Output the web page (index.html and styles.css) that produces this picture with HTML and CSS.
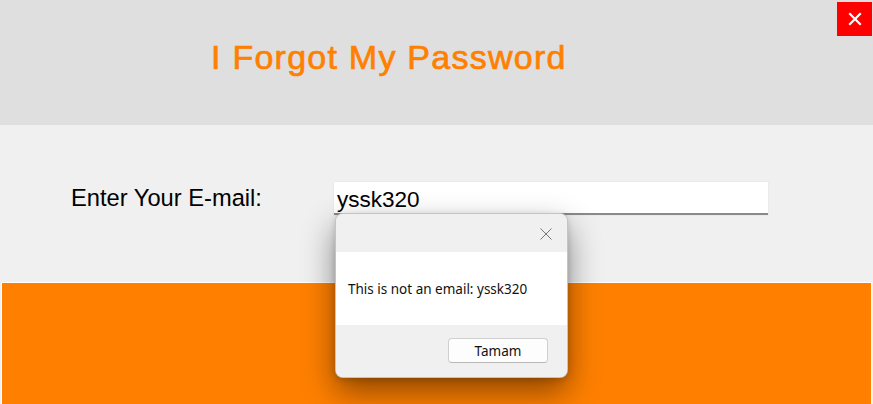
FILE: index.html
```html
<!DOCTYPE html>
<html>
<head>
<meta charset="utf-8">
<link rel="stylesheet" href="styles.css">
</head>
<body>
<div class="window">
  <header class="header">
    <h1 class="title">I Forgot My Password</h1>
    <button class="close-btn" aria-label="Close">
      <svg width="14" height="14" viewBox="0 0 14 14"><path d="M2 2 L12 12 M12 2 L2 12" stroke="#fff" stroke-width="2.2" stroke-linecap="square"/></svg>
    </button>
  </header>
  <section class="form-row">
    <label class="label">Enter Your E-mail:</label>
    <div class="input">yssk320</div>
  </section>
  <footer class="footer"></footer>

  <div class="dialog">
    <div class="dlg-title">
      <svg class="dlg-x" width="12" height="12" viewBox="0 0 12 12"><path d="M0.5 0.5 L11.5 11.5 M11.5 0.5 L0.5 11.5" stroke="#777" stroke-width="1"/></svg>
    </div>
    <div class="dlg-body">This is not an email: yssk320</div>
    <div class="dlg-foot">
      <button class="dlg-btn">Tamam</button>
    </div>
  </div>
</div>
</body>
</html>
```
FILE: styles.css
```css
html, body {
  margin: 0;
  padding: 0;
  background: #f0f0f0;
}
.window {
  position: relative;
  width: 873px;
  height: 404px;
  overflow: hidden;
  font-family: "Liberation Sans", Arial, sans-serif;
}
.header {
  height: 125px;
  background: #dfdfdf;
  display: flex;
  align-items: flex-start;
  padding-left: 211px;
  box-sizing: border-box;
}
.title {
  margin: 0;
  padding-top: 37px;
  font-size: 34px;
  font-weight: normal;
  letter-spacing: 1.25px;
  color: #ff8000;
  -webkit-text-stroke: 0.7px #ff8000;
  line-height: 40px;
}
.close-btn {
  position: absolute;
  left: 837px;
  top: 2px;
  width: 35px;
  height: 34px;
  background: #ff0000;
  border: none;
  padding: 0;
  display: flex;
  align-items: center;
  justify-content: center;
}
.form-row {
  height: 157px;
  background: #f0f0f0;
  display: flex;
  align-items: flex-start;
  padding-left: 71px;
  box-sizing: border-box;
}
.label {
  margin-top: 59px;
  font-size: 23.7px;
  line-height: 28px;
  color: #000;
  width: 263px;
}
.input {
  margin-top: 57px;
  width: 431px;
  height: 31px;
  background: #fff;
  border-bottom: 2px solid #8a8a8a;
  box-shadow: 0 0 2px rgba(0,0,0,0.08);
  font-size: 22.5px;
  line-height: 36px;
  padding-left: 3px;
  box-sizing: content-box;
  color: #000;
}
.footer {
  height: 121px;
  margin: 0 1px;
  border: 1px solid #fff;
  border-bottom: none;
  background: #ff8000;
}
.dialog {
  position: absolute;
  left: 335px;
  top: 213px;
  width: 233px;
  height: 165px;
  border-radius: 8px;
  overflow: hidden;
  border: 1px solid rgba(0,0,0,0.18);
  box-sizing: border-box;
  background: #f0f0f0;
  box-shadow: 0 14px 32px rgba(0,0,0,0.45), 0 2px 6px rgba(0,0,0,0.15);
  display: flex;
  flex-direction: column;
  font-family: "Noto Sans", "Open Sans", sans-serif;
}
.dlg-title {
  height: 38px;
  background: #f0f0f0;
  display: flex;
  justify-content: flex-end;
  align-items: center;
  padding-right: 15px;
}
.dlg-x {
  margin-top: 2px;
}
.dlg-body {
  height: 73px;
  background: #fff;
  font-size: 13.5px;
  color: #111;
  padding-left: 12px;
  display: flex;
  align-items: center;
  padding-bottom: 0;
  box-sizing: border-box;
}
.dlg-foot {
  flex: 1;
  background: #f0f0f0;
  display: flex;
  justify-content: flex-end;
  align-items: flex-start;
  padding-right: 19px;
  padding-top: 13px;
}
.dlg-btn {
  width: 100px;
  height: 25px;
  background: #fdfdfd;
  border: 1px solid #d0d0d0;
  border-bottom-color: #b8b8b8;
  border-radius: 4px;
  font-family: "Noto Sans", "Open Sans", sans-serif;
  font-size: 13.5px;
  color: #111;
  padding: 0;
}
```
